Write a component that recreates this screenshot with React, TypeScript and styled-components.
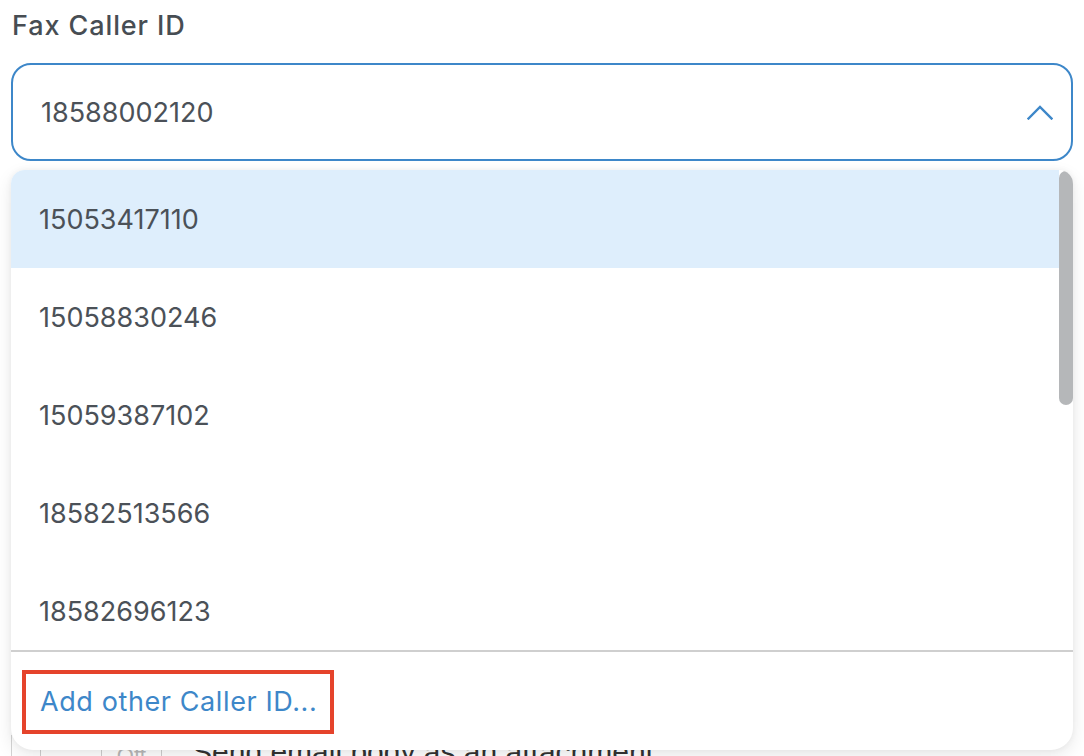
import React from 'react';
import styled, { createGlobalStyle } from 'styled-components';

const GlobalStyle = createGlobalStyle`
  html, body {
    margin: 0;
    padding: 0;
    background: #ffffff;
    overflow: hidden;
  }
  body {
    font-family: 'Inter', 'Noto Sans', sans-serif;
    color: #4b5158;
  }
`;

const Page = styled.div`
  width: 1084px;
  height: 756px;
  box-sizing: border-box;
  padding: 9px 11px 0 11px;
  overflow: hidden;
`;

const Label = styled.div`
  font-size: 27px;
  font-weight: 500;
  letter-spacing: 0.9px;
  color: #474d53;
  margin: 0 0 21px 1px;
  line-height: 33px;
`;

const Field = styled.div`
  position: relative;
`;

const SelectBox = styled.div`
  height: 98px;
  box-sizing: border-box;
  border: 2px solid #3d87c9;
  border-radius: 20px;
  background: #fff;
  display: flex;
  align-items: center;
  justify-content: space-between;
  padding: 0 18px 0 28px;
  font-size: 27px;
  color: #4b5158;
`;

const Menu = styled.div`
  position: absolute;
  top: 107px;
  left: 0;
  right: 0;
  background: #fff;
  border-radius: 14px 14px 22px 22px;
  box-shadow: 0 6px 18px rgba(0, 0, 0, 0.09), 0 0 6px rgba(0, 0, 0, 0.05);
  overflow: hidden;
  z-index: 2;
`;

const ListArea = styled.div`
  height: 480px;
  display: flex;
`;

const Rows = styled.div`
  flex: 1;
  overflow: hidden;
`;

const ScrollTrack = styled.div`
  width: 14px;
  padding-top: 1px;
`;

const ScrollThumb = styled.div`
  height: 234px;
  background: #b5b7b9;
  border-radius: 7px;
`;

const Option = styled.div<{ $active?: boolean }>`
  height: 98px;
  display: flex;
  align-items: center;
  padding-left: 28px;
  font-size: 27px;
  color: #4b5158;
  background: ${p => (p.$active ? '#deeefc' : '#fff')};
`;

const MenuFooter = styled.div`
  border-top: 2px solid #cfcfcf;
  height: 98px;
  display: flex;
  align-items: center;
  padding-left: 11px;
`;

const Highlight = styled.div`
  border: 4px solid #e5432b;
  padding: 0 13px 2px 14px;
  height: 64px;
  box-sizing: border-box;
  display: flex;
  align-items: center;
  margin-top: 2px;
`;

const AddLink = styled.span`
  font-size: 27px;
  letter-spacing: 0.6px;
  color: #3d87c9;
`;

const Settings = styled.div`
  margin-top: 574px;
  border-left: 1px solid #d4d4d4;
  display: flex;
  align-items: flex-start;
  gap: 30px;
  padding-left: 28px;
`;

const Toggle = styled.div`
  width: 120px;
  height: 40px;
  border: 1px solid #cfcfcf;
  display: flex;
  color: #b9b9b9;
  font-family: 'Liberation Sans', Arial, sans-serif;
  font-size: 22px;
`;

const ToggleHalf = styled.div<{ $divider?: boolean }>`
  flex: 1;
  display: flex;
  align-items: center;
  justify-content: center;
  border-left: ${p => (p.$divider ? '1px solid #cfcfcf' : 'none')};
`;

const SettingText = styled.div`
  font-family: 'Liberation Sans', Arial, sans-serif;
  font-size: 30px;
  color: #333;
`;

const ChevronUp = () => (
  <svg width="26" height="15" viewBox="0 0 26 15" fill="none">
    <path d="M1.5 13.5 L13 2 L24.5 13.5" stroke="#3d87c9" strokeWidth="2.4" strokeLinecap="square" />
  </svg>
);

const numbers = [
  '15053417110',
  '15058830246',
  '15059387102',
  '18582513566',
  '18582696123',
];

const App = () => (
  <>
    <GlobalStyle />
    <Page>
      <Label>Fax Caller ID</Label>
      <Field>
        <SelectBox>
          <span>18588002120</span>
          <ChevronUp />
        </SelectBox>
        <Menu>
          <ListArea>
            <Rows>
              {numbers.map((n, i) => (
                <Option key={n} $active={i === 0}>
                  {n}
                </Option>
              ))}
            </Rows>
            <ScrollTrack>
              <ScrollThumb />
            </ScrollTrack>
          </ListArea>
          <MenuFooter>
            <Highlight>
              <AddLink>Add other Caller ID...</AddLink>
            </Highlight>
          </MenuFooter>
        </Menu>
        <Settings>
          <Toggle>
            <ToggleHalf />
            <ToggleHalf $divider>Off</ToggleHalf>
          </Toggle>
          <SettingText>Send email body as an attachment</SettingText>
        </Settings>
      </Field>
    </Page>
  </>
);

export default App;
